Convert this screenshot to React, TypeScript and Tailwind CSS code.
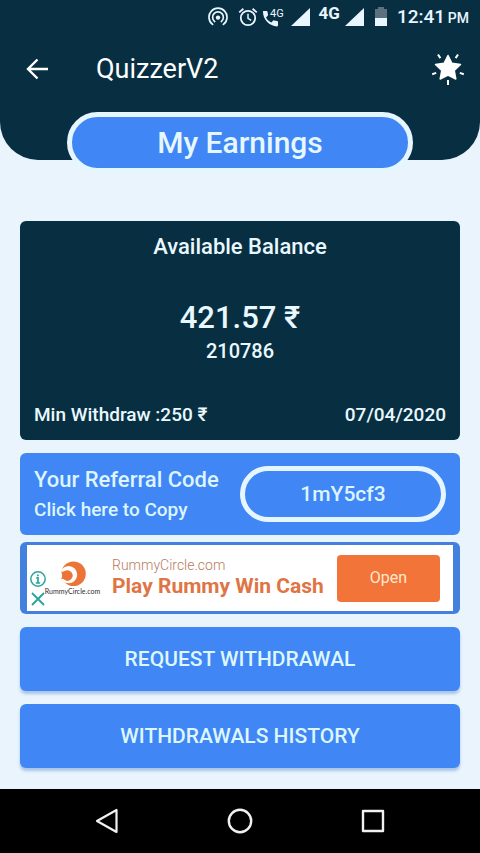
import React from "react";

function StatusBar() {
  return (
    <div className="flex h-[34px] items-center justify-end pr-[11px] text-[#e9f6ff]">
      <svg className="mr-[10px] h-5 w-5" viewBox="0 0 20 20" fill="none" stroke="currentColor" strokeWidth="1.7" strokeLinecap="round" aria-hidden="true">
        <path d="M4.600 17.400a9 9 0 1 1 10.800 0" />
        <path d="M6.700 14.600a5.400 5.400 0 1 1 6.600 0" />
        <circle cx="10" cy="10.600" r="2.200" fill="currentColor" stroke="none" />
      </svg>
      <svg className="mr-[5px] h-5 w-5" viewBox="0 0 20 20" fill="none" stroke="currentColor" strokeWidth="1.8" aria-hidden="true">
        <circle cx="10" cy="11" r="7.2" />
        <path d="M10 6.8v4.6l3.2 2" strokeWidth="1.5" />
        <path d="M1.2 5.4 5.4 1.8M18.8 5.4l-4.2-3.6" />
      </svg>
      <svg className="mr-2 h-5 w-5 overflow-visible" viewBox="0 0 20 20" fill="currentColor" aria-hidden="true">
        <path d="M0 4h3.600c.5 0 .8.3.9.8l.5 3c0 .4 0 .7-.3 1L3 10.400c1.400 2.500 2.800 3.700 5.400 5l1.600-1.700c.3-.3.600-.4 1-.300l3.200.700c.5.1.8.5.8.9v3.600c0 .5-.4.8-.9.8C6.500 19.200-.4 12.500 0 4Z" />
        <text x="7" y="10" fontSize="11" fontFamily="Roboto, sans-serif">4G</text>
      </svg>
      <svg className="mr-2 h-5 w-5" viewBox="0 0 20 20" fill="currentColor" aria-hidden="true">
        <path d="M19 1v18H0Z" />
      </svg>
      <span className="mr-1 -mt-2 text-[17px] leading-5 font-bold">4G</span>
      <svg className="mr-[10px] h-5 w-5" viewBox="0 0 20 20" fill="currentColor" aria-hidden="true">
        <path d="M20 1v18H1Z" />
      </svg>
      <svg className="mr-[9px] h-5 w-[14px]" viewBox="0 0 14 20" aria-hidden="true">
        <path d="M4 0h6v2h3v9H1V2h3Z" fill="#5c7180" />
        <path d="M1 11h12v8H1Z" fill="currentColor" />
      </svg>
      <span className="text-[19px] leading-6 font-medium">
        12:41 <span className="-ml-0.5 text-sm">PM</span>
      </span>
    </div>
  );
}

function Header() {
  return (
    <header className="flex flex-col rounded-b-[38px] bg-[#072f41]">
      <StatusBar />
      <div className="flex h-[70px] items-center pr-[15px] pl-[26px] text-white">
        <button type="button" aria-label="Back" className="mr-[48px]">
          <svg className="block h-[22px] w-[22px]" viewBox="0 0 22 22" fill="none" stroke="currentColor" strokeWidth="2.400" aria-hidden="true">
            <path d="M22 11H2M11.500 1.500 2 11l9.500 9.500" />
          </svg>
        </button>
        <h1 className="flex-1 text-[27px] leading-8">QuizzerV2</h1>
        <button type="button" aria-label="Rewards">
          <svg className="block h-[34px] w-[34px]" viewBox="0 0 34 34" aria-hidden="true">
            <path
              d="m17 3.500 3.900 7.800 8.600 1.200-6.300 6 1.600 8.500L17 23l-7.800 4 1.600-8.500-6.300-6 8.600-1.200Z"
              fill="currentColor" stroke="currentColor" strokeWidth="1.500" strokeLinejoin="round"
            />
            <path d="m7 2.500 2.400 3.600M27 2.500l-2.400 3.600M1.200 22.200l4-1.300M32.800 22.200l-4-1.300M17 28v5" stroke="currentColor" strokeWidth="2" fill="none" />
          </svg>
        </button>
      </div>
      <h2 className="mx-[67px] mt-2 -mb-[13px] rounded-full border-[5px] border-[#e6f6ff] bg-[#4086f4] py-[9px] text-center text-[30px] leading-[33px] font-medium text-[#e6f8ff]">
        My Earnings
      </h2>
    </header>
  );
}

function BalanceCard() {
  return (
    <section className="flex flex-col rounded-md bg-[#072f41] px-[14px] pt-3 pb-[11px] text-center font-medium text-[#e9f8ff]">
      <h3 className="text-[22px] leading-7">Available Balance</h3>
      <p className="mt-[38px] text-[31px] leading-[38px]">421.57 ₹</p>
      <p className="text-xl leading-7">210786</p>
      <div className="mt-[36px] flex justify-between text-[19px] leading-7">
        <span>Min Withdraw :250 ₹</span>
        <time dateTime="2020-04-07">07/04/2020</time>
      </div>
    </section>
  );
}

function ReferralCard() {
  return (
    <button type="button" className="flex items-center justify-between rounded-md bg-[#4086f4] px-[14px] py-[13px] text-left font-medium text-[#dcf5ff]">
      <span className="flex flex-col gap-1">
        <span className="text-[22px] leading-7">Your Referral Code</span>
        <span className="text-[19px] leading-6">Click here to Copy</span>
      </span>
      <span className="w-1/2 rounded-full border-[5px] border-[#e6f6ff] py-[9px] text-center text-[21px] leading-7">
        1mY5cf3
      </span>
    </button>
  );
}

function AdBanner() {
  return (
    <aside className="-mt-[6px] rounded-md bg-[#4480de] px-[7px] py-[3px]">
      <div className="flex h-[66px] items-center bg-white pr-[13px] pl-[3px]">
        <div className="flex flex-col gap-1 self-end pb-1 text-[#2aa59b]">
          <button type="button" aria-label="Ad information">
            <svg className="block h-4 w-4" viewBox="0 0 16 16" fill="none" stroke="currentColor" strokeWidth="1.500" aria-hidden="true">
              <circle cx="8" cy="8" r="7.200" />
              <path d="M6.300 6.800H8V12M5.800 12h4.400M7.900 3.400v1.800" strokeWidth="1.700" />
            </svg>
          </button>
          <button type="button" aria-label="Close ad">
            <svg className="block h-4 w-4" viewBox="0 0 16 16" fill="none" stroke="currentColor" strokeWidth="1.900" aria-hidden="true">
              <path d="m2 2 12 12M14 2 2 14" />
            </svg>
          </button>
        </div>
        <div className="flex w-[53px] flex-col items-center">
          <svg className="block h-[26px] w-[26px]" viewBox="0 0 26 26" aria-hidden="true">
            <circle cx="13.500" cy="12.800" r="12.300" fill="#ed7437" />
            <circle cx="8.600" cy="13.600" r="8.600" fill="white" />
            <path d="M1 10.400c1.300.7 2.400.4 3.600-.300a5.200 5.200 0 1 1-.5 8.500c-1-.8-2-.9-3.300-.5.900-1 1.400-1.900 1.300-3.300 0-1.500-.2-2.700-1.100-4.400Z" fill="#ed7437" />
          </svg>
          <span className="font-['Lato',sans-serif] text-[7px] leading-[9px] text-[#302d2d]">RummyCircle.com</span>
        </div>
        <div className="ml-[13px] flex flex-1 flex-col pb-1 whitespace-nowrap">
          <span className="text-sm leading-5 font-light text-[#b77c5d]">RummyCircle.com</span>
          <strong className="text-[21px] leading-[22px] font-bold text-[#df7444]">Play Rummy Win Cash</strong>
        </div>
        <button type="button" className="h-[47px] w-[103px] rounded bg-[#f27438] text-base text-[#ffe8ce]">
          Open
        </button>
      </div>
    </aside>
  );
}

function ActionButton({ children }: { children: React.ReactNode }) {
  return (
    <button type="button" className="h-16 rounded-md bg-[#4086f4] text-[21px] leading-7 font-medium text-[#dcf7ff] shadow-[0_3px_3px_#a9c4e8]">
      {children}
    </button>
  );
}

function NavigationBar() {
  return (
    <nav className="flex h-16 items-center justify-center gap-[107px] bg-black text-[#f1f1f1]">
      <button type="button" aria-label="Back">
        <svg className="block h-[26px] w-[26px]" viewBox="0 0 26 26" fill="none" stroke="currentColor" strokeWidth="2.200" strokeLinejoin="round" aria-hidden="true">
          <path d="M22.500 2v22L3 13Z" />
        </svg>
      </button>
      <button type="button" aria-label="Home">
        <svg className="block h-[26px] w-[26px]" viewBox="0 0 26 26" fill="none" stroke="currentColor" strokeWidth="2.400" aria-hidden="true">
          <circle cx="13" cy="13" r="11.200" />
        </svg>
      </button>
      <button type="button" aria-label="Recent apps">
        <svg className="block h-[26px] w-[26px]" viewBox="0 0 26 26" fill="none" stroke="currentColor" strokeWidth="2.400" strokeLinejoin="round" aria-hidden="true">
          <path d="M3 3h20v20H3Z" />
        </svg>
      </button>
    </nav>
  );
}

export default function App() {
  return (
    <div className="flex min-h-screen flex-col bg-[#e9f4fd] font-['Roboto',sans-serif]">
      <Header />
      <main className="flex flex-1 flex-col gap-[13px] px-5 pt-[61px] pb-[21px]">
        <BalanceCard />
        <ReferralCard />
        <AdBanner />
        <ActionButton>REQUEST WITHDRAWAL</ActionButton>
        <ActionButton>WITHDRAWALS HISTORY</ActionButton>
      </main>
      <NavigationBar />
    </div>
  );
}
